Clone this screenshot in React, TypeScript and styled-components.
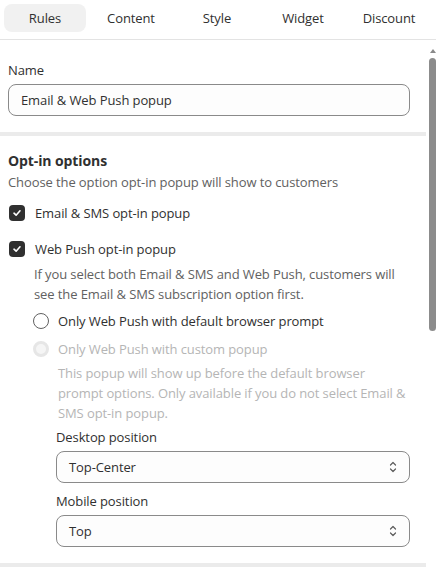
import React from 'react'
import styled, {createGlobalStyle} from 'styled-components'

const GlobalStyle = createGlobalStyle`
  html, body {
    margin: 0;
    padding: 0;
    background: #ffffff;
  }
  body {
    font-family: "Open Sans", "Noto Sans", sans-serif;
    font-size: 13px;
    color: #303030;
    -webkit-font-smoothing: antialiased;
  }
  * {
    box-sizing: border-box;
  }
`;

const Frame = styled.div`
  width: 436px;
  height: 567px;
  display: flex;
  flex-direction: column;
  overflow: hidden;
  background: #fff;
`;

const TabBar = styled.div`
  display: grid;
  grid-template-columns: repeat(5, 82px);
  gap: 4px;
  padding: 4px 4px 7px;
  border-bottom: 1px solid #e3e3e3;
`;

const Tab = styled.button<{ $active?: boolean }>`
  height: 28px;
  border: none;
  border-radius: 8px;
  background: ${p => (p.$active ? '#f1f1f1' : 'transparent')};
  font-family: inherit;
  font-size: 13px;
  font-weight: 500;
  color: #303030;
  letter-spacing: -0.1px;
  padding: 0;
  cursor: pointer;
`;

const Body = styled.div`
  flex: 1;
  display: flex;
  min-height: 0;
`;

const Content = styled.div`
  flex: 1;
  display: flex;
  flex-direction: column;
  overflow: hidden;
`;

const Rail = styled.div`
  width: 10px;
  display: flex;
  flex-direction: column;
  align-items: flex-end;
  padding-top: 9px;
  gap: 5px;
`;

const RailArrow = styled.div`
  width: 0;
  height: 0;
  border-left: 3.5px solid transparent;
  border-right: 3.5px solid transparent;
  border-bottom: 4px solid #8a8a8a;
`;

const Thumb = styled.div`
  width: 7px;
  height: 273px;
  border-radius: 4px;
  background: #8c8c8c;
`;

const Section = styled.section<{ $top: number; $bottom: number }>`
  padding: ${p => p.$top}px 16px ${p => p.$bottom}px 8px;
  display: flex;
  flex-direction: column;
`;

const Divider = styled.div`
  height: 4px;
  background: #ebebeb;
  flex-shrink: 0;
`;

const FieldLabel = styled.label<{ $top?: number }>`
  margin-top: ${p => p.$top ?? 0}px;
  font-size: 13px;
  line-height: 20px;
  font-weight: 500;
  color: #303030;
  letter-spacing: -0.1px;
`;

const TextInput = styled.div`
  margin-top: 4px;
  height: 32px;
  border: 1px solid #8a8a8a;
  border-radius: 8px;
  background: #fdfdfd;
  display: flex;
  align-items: center;
  padding: 0 12px;
  font-size: 13px;
  letter-spacing: -0.1px;
  color: #303030;
`;

const Title = styled.h2`
  margin: 0;
  font-size: 14px;
  line-height: 22px;
  font-weight: 700;
  color: #303030;
  letter-spacing: -0.1px;
`;

const Subdued = styled.p<{ $indent?: number; $top?: number; $disabled?: boolean }>`
  margin: ${p => p.$top ?? 0}px 0 0 ${p => p.$indent ?? 0}px;
  font-size: 13px;
  line-height: 20px;
  color: ${p => (p.$disabled ? '#b5b5b5' : '#616161')};
  letter-spacing: -0.1px;
`;

const CheckRow = styled.div<{ $top: number }>`
  margin-top: ${p => p.$top}px;
  display: flex;
  align-items: center;
  gap: 10px;
  height: 20px;
`;

const CheckBox = styled.span`
  width: 16px;
  height: 16px;
  border-radius: 4px;
  background: #303030;
  display: flex;
  align-items: center;
  justify-content: center;
  margin-left: 1px;
`;

const OptionText = styled.span<{ $disabled?: boolean }>`
  font-size: 13px;
  line-height: 20px;
  color: ${p => (p.$disabled ? '#b5b5b5' : '#303030')};
  letter-spacing: -0.1px;
`;

const RadioRow = styled.div<{ $top: number }>`
  margin: ${p => p.$top}px 0 0 25px;
  display: flex;
  align-items: center;
  gap: 9px;
  height: 20px;
`;

const RadioCircle = styled.span<{ $disabled?: boolean }>`
  width: 16px;
  height: 16px;
  border-radius: 50%;
  flex-shrink: 0;
  border: ${p => (p.$disabled ? '3px solid #e6e6e6' : '1px solid #616161')};
  background: ${p => (p.$disabled ? '#f5f5f5' : '#fff')};
`;

const PositionBlock = styled.div`
  margin: 4px 0 0 48px;
  display: flex;
  flex-direction: column;
`;

const SelectBox = styled.div`
  margin-top: 4px;
  height: 32px;
  border: 1px solid #8a8a8a;
  border-radius: 8px;
  background: #fdfdfd;
  display: flex;
  align-items: center;
  justify-content: space-between;
  padding: 0 10px 0 12px;
  font-size: 13px;
  letter-spacing: -0.1px;
  color: #303030;
`;

const tabs = ['Rules', 'Content', 'Style', 'Widget', 'Discount']

const Check = () => (
  <svg width="10" height="10" viewBox="0 0 10 10" fill="none">
    <path d="M2 5.2 L4.1 7.2 L8 2.8" stroke="#fff" strokeWidth="1.6" strokeLinecap="round" strokeLinejoin="round" />
  </svg>
)

const Chevrons = () => (
  <svg width="12" height="14" viewBox="0 0 12 14" fill="none">
    <path d="M3.5 5 L6 2.5 L8.5 5" stroke="#5c5c5c" strokeWidth="1.2" strokeLinecap="round" strokeLinejoin="round" />
    <path d="M3.5 9 L6 11.5 L8.5 9" stroke="#5c5c5c" strokeWidth="1.2" strokeLinecap="round" strokeLinejoin="round" />
  </svg>
)

const App = () => {
  return (
    <Frame>
      <GlobalStyle />
      <TabBar>
        {tabs.map((t, i) => (
          <Tab key={t} $active={i === 0}>{t}</Tab>
        ))}
      </TabBar>
      <Body>
        <Content>
          <Section $top={20} $bottom={16}>
            <FieldLabel>Name</FieldLabel>
            <TextInput>Email &amp; Web Push popup</TextInput>
          </Section>
          <Divider />
          <Section $top={14} $bottom={16}>
            <Title>Opt-in options</Title>
            <Subdued>Choose the option opt-in popup will show to customers</Subdued>
            <CheckRow $top={11}>
              <CheckBox><Check /></CheckBox>
              <OptionText>Email &amp; SMS opt-in popup</OptionText>
            </CheckRow>
            <CheckRow $top={16}>
              <CheckBox><Check /></CheckBox>
              <OptionText>Web Push opt-in popup</OptionText>
            </CheckRow>
            <Subdued $indent={26} $top={5}>
              If you select both Email &amp; SMS and Web Push, customers will see the Email &amp; SMS subscription option first.
            </Subdued>
            <RadioRow $top={7}>
              <RadioCircle />
              <OptionText>Only Web Push with default browser prompt</OptionText>
            </RadioRow>
            <RadioRow $top={8}>
              <RadioCircle $disabled />
              <OptionText $disabled>Only Web Push with custom popup</OptionText>
            </RadioRow>
            <Subdued $indent={50} $top={4} $disabled>
              This popup will show up before the default browser prompt options. Only available if you do not select Email &amp; SMS opt-in popup.
            </Subdued>
            <PositionBlock>
              <FieldLabel>Desktop position</FieldLabel>
              <SelectBox>Top-Center<Chevrons /></SelectBox>
              <FieldLabel $top={8}>Mobile position</FieldLabel>
              <SelectBox>Top<Chevrons /></SelectBox>
            </PositionBlock>
          </Section>
          <Divider />
        </Content>
        <Rail>
          <RailArrow />
          <Thumb />
        </Rail>
      </Body>
    </Frame>
  )
}

export default App
